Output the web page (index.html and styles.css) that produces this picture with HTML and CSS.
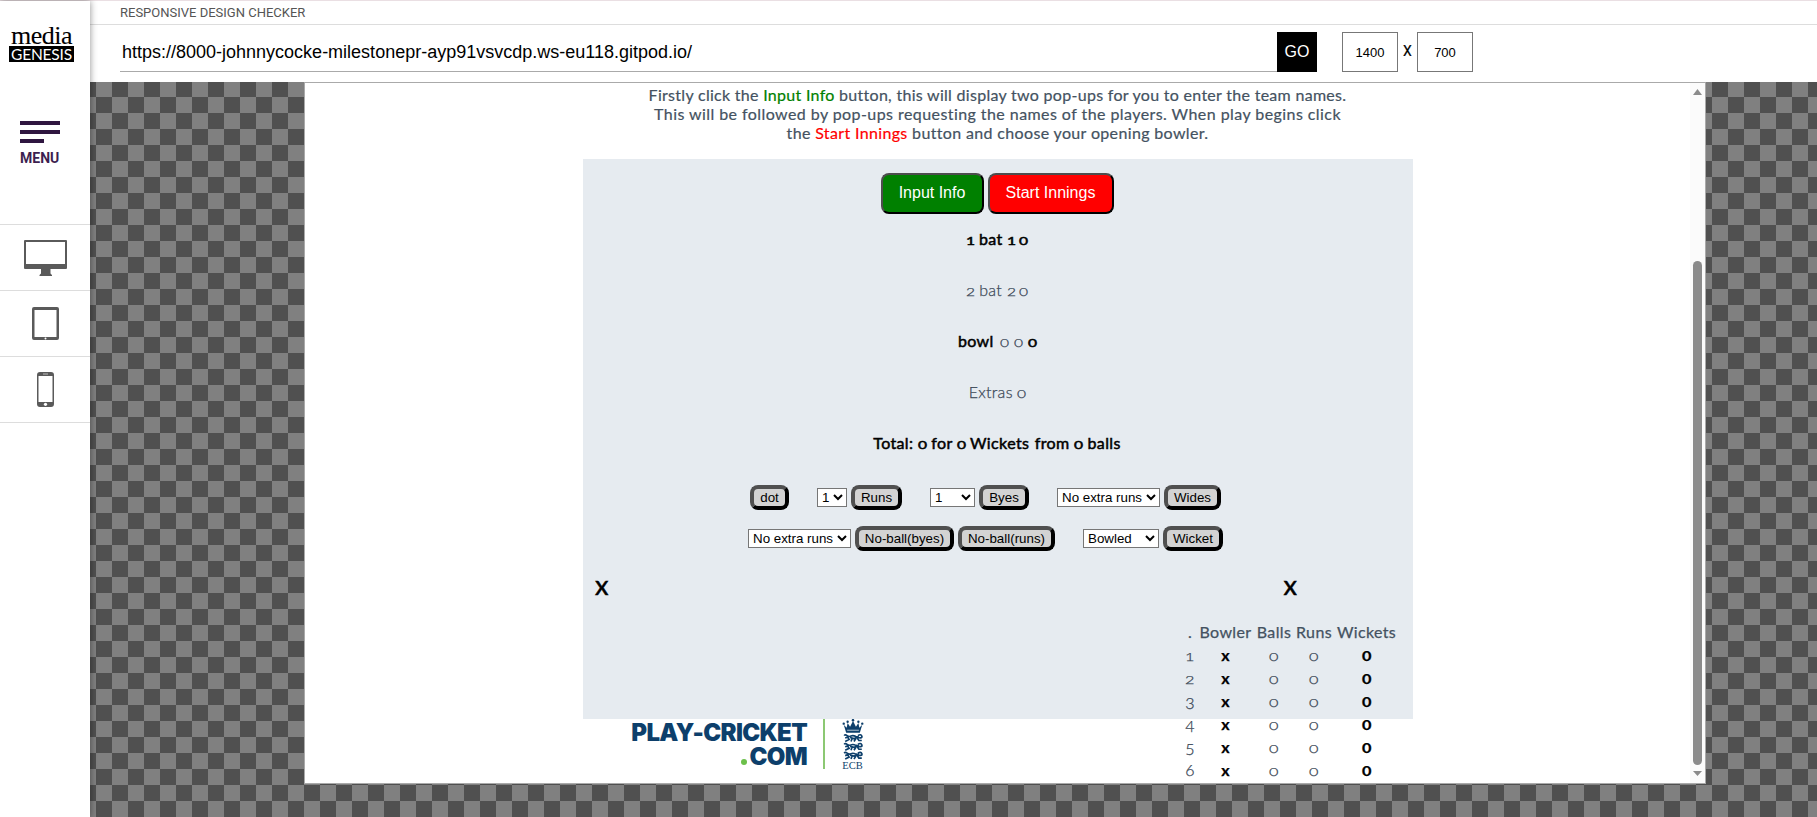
FILE: index.html
```html
<!DOCTYPE html>
<html lang="en">
<head>
<meta charset="utf-8">
<title>Responsive Design Checker</title>
<link rel="stylesheet" href="styles.css">
</head>
<body>
<div class="app">
  <aside class="sidebar">
    <div class="brand">
      <span class="brand-top">media</span>
      <span class="brand-bottom">GENESIS</span>
    </div>
    <div class="menu">
      <span class="bar"></span><span class="bar"></span><span class="bar short"></span>
      <span class="menu-label">MENU</span>
    </div>
    <nav class="devices">
      <div class="device">
        <svg width="43" height="36" viewBox="0 0 43 36"><path fill="#5a5a5a" fill-rule="evenodd" d="M1 0h41q1 0 1 1v27q0 1-1 1H26.500v4.500l1.500 1.500v1H15.500v-1l1.500-1.500V29H1q-1 0-1-1V1q0-1 1-1zM2 2v22h39V2z"/></svg>
      </div>
      <div class="device">
        <svg width="27" height="33" viewBox="0 0 27 33"><path fill="#5a5a5a" fill-rule="evenodd" d="M2 0h23q2 0 2 2v29q0 2-2 2H2q-2 0-2-2V2q0-2 2-2zM2.500 3v27h22V3z"/><circle cx="13.500" cy="31.500" r="1" fill="#fff"/></svg>
      </div>
      <div class="device">
        <svg width="17" height="35" viewBox="0 0 17 35"><path fill="#5a5a5a" fill-rule="evenodd" d="M3 0h11q3 0 3 3v29q0 3-3 3H3q-3 0-3-3V3q0-3 3-3zM1.500 4v26h14V4z"/><path d="M6 2h5" stroke="#bbb"/><circle cx="8.500" cy="32.300" r="1.600" fill="#fff"/></svg>
      </div>
    </nav>
  </aside>
  <main class="main">
    <div class="titlebar">RESPONSIVE DESIGN CHECKER</div>
    <div class="urlbar">
      <div class="url">https://8000-johnnycocke-milestonepr-ayp91vsvcdp.ws-eu118.gitpod.io/</div>
      <div class="go">GO</div>
      <div class="size">1400</div>
      <div class="by">X</div>
      <div class="size">700</div>
    </div>
    <div class="stage">
      <div class="frame">
        <div class="page">
          <div class="intro">
            <p class="l1">Firstly click the <span class="green">Input Info</span> button, this will display two pop-ups for you to enter the team names.</p>
            <p class="l2">This will be followed by pop-ups requesting the names of the players. When play begins click</p>
            <p class="l3">the <span class="red">Start Innings</span> button and choose your opening bowler.</p>
          </div>
          <section class="panel">
            <div class="actions">
              <button class="action info">Input Info</button>
              <button class="action start">Start Innings</button>
            </div>
            <p class="score strong s1"><i>1</i> bat <i>1</i> <i>0</i></p>
            <p class="score s2"><i>2</i> bat <i>2</i> <i>0</i></p>
            <p class="score s3"><b>bowl</b> <i>0</i> <i>0</i> <b><i>0</i></b></p>
            <p class="score s4">Extras <i>0</i></p>
            <p class="score strong s5">Total: <i>0</i> for <i>0</i> Wickets from <i>0</i> balls</p>
            <div class="controls row1">
              <div class="group"><button class="w39">dot</button></div>
              <div class="group"><select class="w30"><option>1</option></select><button class="w51">Runs</button></div>
              <div class="group"><select class="w45"><option>1</option></select><button class="w50">Byes</button></div>
              <div class="group"><select class="w103"><option>No extra runs</option></select><button class="w57">Wides</button></div>
            </div>
            <div class="controls row2">
              <div class="group"><select class="w103"><option>No extra runs</option></select><button class="w99">No-ball(byes)</button><button class="w97">No-ball(runs)</button></div>
              <div class="group"><select class="w76"><option>Bowled</option></select><button class="w60">Wicket</button></div>
            </div>
            <div class="teams"><span>x</span><span>x</span></div>
            <div class="bowling">
              <div class="tr th"><span>.</span><span>Bowler</span><span>Balls</span><span>Runs</span><span>Wickets</span></div>
              <div class="tr"><span><i>1</i></span><b>x</b><span><i>0</i></span><span><i>0</i></span><b><i>0</i></b></div>
              <div class="tr"><span><i>2</i></span><b>x</b><span><i>0</i></span><span><i>0</i></span><b><i>0</i></b></div>
              <div class="tr"><span class="low">3</span><b>x</b><span><i>0</i></span><span><i>0</i></span><b><i>0</i></b></div>
              <div class="tr"><span class="low">4</span><b>x</b><span><i>0</i></span><span><i>0</i></span><b><i>0</i></b></div>
              <div class="tr"><span class="low">5</span><b>x</b><span><i>0</i></span><span><i>0</i></span><b><i>0</i></b></div>
              <div class="tr"><span>6</span><b>x</b><span><i>0</i></span><span><i>0</i></span><b><i>0</i></b></div>
            </div>
          </section>
          <footer class="logo">
            <div class="wordmark"><span class="w-top">PLAY-CRICKET</span><span class="w-bot"><em></em>COM</span></div>
            <div class="rule"></div>
            <div class="ecb">
              <svg width="22" height="43" viewBox="0 0 22 43">
                <g fill="#0d3f6b">
                  <path d="M4 14L1.500 6l3 3 1-5 2.500 4L11 2l3 6 2.500-4 1 5 3-3L18 14z"/>
                  <circle cx="1.500" cy="4.800" r="1.200"/><circle cx="5.500" cy="2.800" r="1.200"/><circle cx="11" cy="1.200" r="1.300"/><circle cx="16.500" cy="2.800" r="1.200"/><circle cx="20.500" cy="4.800" r="1.200"/>
                </g>
                <path d="M5 11.500h12" stroke="#fff" stroke-width=".7"/>
                <g fill="none" stroke="#0d3f6b" stroke-width="1.700">
                  <path d="M2 17q1-1.500 3 0t4 .5 5 .5l3 .500M3 19.500l3-1M5 17.500l2 3.500-4 2M8 19l4 1 3-1 2 3h3M10 20l-1 3M14 20l-2 3M16 19q5 1 4-1.500t-4-.5"/>
                  <path d="M2 26q1-1.500 3 0t4 .5 5 .5l3 .500M3 28.500l3-1M5 26.500l2 3.500-4 2M8 28l4 1 3-1 2 3h3M10 29l-1 3M14 29l-2 3M16 28q5 1 4-1.500t-4-.5"/>
                  <path d="M2 35q1-1.500 3 0t4 .5 5 .5l3 .500M3 37.500l3-1M5 35.500l2 3.500-4 2M8 37l4 1 3-1 2 3h3M10 38l-1 3M14 38l-2 3M16 37q5 1 4-1.500t-4-.5"/>
                </g>
              </svg>
              <span>ECB</span>
            </div>
          </footer>
        </div>
        <div class="scroll">
          <svg width="9" height="6" viewBox="0 0 9 6"><path d="M4.500 0L9 6H0z" fill="#8b8b8b"/></svg>
          <div class="thumb"></div>
          <svg width="9" height="5" viewBox="0 0 9 5"><path d="M4.500 5L9 0H0z" fill="#8b8b8b"/></svg>
        </div>
      </div>
    </div>
  </main>
</div>
</body>
</html>
```
FILE: styles.css
```css
* { box-sizing: border-box; }
body { margin: 0; background: #fff; font-family: Lato, sans-serif; overflow: hidden; }
p { margin: 0; }
i { font-style: normal; }
.app { display: flex; width: 1817px; height: 817px; border-top: 1px solid #eadfe3; }

/* sidebar */
.sidebar { width: 90px; height: 817px; flex: none; background: #fff; box-shadow: 0 0 7px rgba(0,0,0,.45); z-index: 2; }
.brand { display: flex; flex-direction: column; width: 65px; margin: 21px 0 0 9px; height: 40px; }
.brand-top { font: 26px/27px "Liberation Serif", serif; text-align: center; letter-spacing: -.5px; -webkit-text-stroke: .1px #000; height: 24px; }
.brand-bottom { background: #000; color: #fff; font: 15.5px/16px Lato, sans-serif; height: 16px; text-align: center; letter-spacing: -.2px; }
.menu { display: flex; flex-direction: column; margin: 59px 0 0 20px; height: 103px; }
.bar { width: 40px; height: 3.500px; background: #2f1640; margin-bottom: 5.500px; }
.short { width: 24px; }
.menu-label { font: bold 14px/16px Roboto, sans-serif; color: #3d1f50; margin-top: 2px; }
.device { height: 66px; border-top: 1px solid #ddd; display: flex; align-items: center; }
.device svg { margin: 0 auto; }
.device:last-child { border-bottom: 1px solid #ddd; height: 67px; padding-bottom: 1px; }

/* toolbar */
.main { flex: 1; display: flex; flex-direction: column; }
.titlebar { height: 24px; border-bottom: 1px solid #ddd; padding-left: 30px; font: 13px/23px Roboto, sans-serif; color: #555; }
.urlbar { height: 57px; display: flex; padding: 7px 0 0 30px; color: #000; }
.url { width: 1157px; height: 40px; border-bottom: 1px solid #aaa; padding-left: 2px; font: 18px/41px "Liberation Sans", sans-serif; }
.go { width: 40px; height: 40px; background: #000; color: #fff; font: 16px/39px "Liberation Sans", sans-serif; text-align: center; }
.size { width: 56px; height: 40px; border: 1px solid #777; font: 13px/40px "Liberation Sans", sans-serif; text-align: center; }
.go + .size { margin-left: 25px; }
.by { width: 19px; text-align: center; font: 14px/38px Roboto, sans-serif; -webkit-text-stroke: .2px; }

/* preview stage */
.stage { flex: 1; padding-left: 214px; background: repeating-conic-gradient(#505050 0 25%, #808080 0 50%) 22px 15px / 32px 32px; }
.frame { width: 1402px; height: 702px; border: 1px solid #aaa; background: #fff; display: flex; }
.page { width: 1385px; height: 700px; overflow: hidden; display: flex; flex-direction: column; align-items: center; color: #445261; }
.scroll { width: 15px; background: #fbfbfb; display: flex; flex-direction: column; align-items: center; padding-top: 6px; }
.thumb { width: 9px; height: 504px; margin: 166px 0 6px; border-radius: 5px; background: #8b8b8b; flex: none; }

.intro { height: 76px; padding-top: 2px; font-size: 16px; line-height: 19px; text-align: center; white-space: nowrap; -webkit-text-stroke: .2px; }
.l1 { letter-spacing: .29px; }
.l2 { letter-spacing: .43px; }
.l3 { letter-spacing: .35px; }
.green { color: green; }
.red { color: red; }

.panel { width: 830px; height: 560px; background: #e6ebf0; padding-top: 14px; margin-left: 1px; }
.actions { display: flex; justify-content: center; gap: 4px; height: 56px; padding-right: 2px; }
.action { width: 103px; height: 41px; font: 16px "Liberation Sans", sans-serif; color: #fff; border: 2px solid #000; border-color: #4d4d4d #000 #000 #4d4d4d; border-radius: 8px; padding: 0 0 1px; }
.info { background: green; }
.start { background: red; width: 126px; }
.score { height: 51px; padding-right: 2px; font-size: 16px; line-height: 19px; font-weight: 300; text-align: center; color: #3a4756; white-space: nowrap; letter-spacing: .3px; word-spacing: 1px; -webkit-text-stroke: .25px; }
.score i { font-size: 12px; }
.score i, .tr i { display: inline-block; transform: scaleX(1.3); letter-spacing: 0; }
.strong, .score b { color: #000; font-weight: 400; -webkit-text-stroke: .5px; }
.s3 { word-spacing: 2.500px; }
.s5 { letter-spacing: .37px; }

.controls { display: flex; height: 41px; }
.row1 { padding-left: 167px; gap: 28px; margin-top: 1px; }
.row2 { padding-left: 165px; gap: 28px; }
.group { display: flex; gap: 4px; align-items: center; height: 25px; }
.group button { height: 25px; padding: 0; font: 13.33px "Liberation Sans", sans-serif; background: #d3d3d3; border: 4px solid #000; border-color: #505050 #000 #000 #505050; border-radius: 8px; color: #000; white-space: nowrap; }
.group select { height: 19px; padding: 0; font: 13.33px "Liberation Sans", sans-serif; border: 1px solid #767676; border-radius: 0; background-color: #fff; color: #000; }
.w30 { width: 30px; } .w39 { width: 39px; } .w45 { width: 45px; } .w50 { width: 50px; } .w51 { width: 51px; }
.w57 { width: 57px; } .w60 { width: 60px; } .w76 { width: 76px; } .w97 { width: 97px; } .w99 { width: 99px; } .w103 { width: 103px; }

.teams { display: flex; justify-content: space-between; padding: 2px 116px 0 12px; font-size: 27px; line-height: 32px; height: 53px; color: #000; -webkit-text-stroke: .5px; }
.bowling { margin-left: 600px; width: 218px; }
.tr { display: grid; grid-template-columns: 14px 57px 40px 40px 65px; height: 23px; line-height: 23px; font-size: 16px; font-weight: 300; text-align: center; color: #3a4756; -webkit-text-stroke: .25px; }
.tr i { font-size: 12.500px; }
.tr b { color: #000; font-weight: 700; }
.tr.th { font-weight: 400; height: 23px; letter-spacing: .35px; color: #445261; }
.low { transform: translateY(2px); }

.logo { width: 831px; display: flex; padding-left: 48px; height: 60px; flex: none; }
.wordmark { width: 177px; display: flex; flex-direction: column; align-items: flex-end; font: 900 24px/24px Inter, sans-serif; letter-spacing: -.65px; color: #0d3f6b; white-space: nowrap; padding-top: 2px; }
.w-bot em { display: inline-block; width: 6px; height: 6px; border-radius: 50%; background: #6cc04a; margin-right: 2px; }
.rule { width: 1.500px; height: 50px; background: #8cc873; margin-left: 16px; }
.ecb { margin-left: 17px; width: 22px; display: flex; flex-direction: column; align-items: center; }
.ecb svg { flex: none; height: 42px; }
.ecb span { font: 10.500px/9px "Liberation Serif", serif; color: #0d3f6b; }
```
